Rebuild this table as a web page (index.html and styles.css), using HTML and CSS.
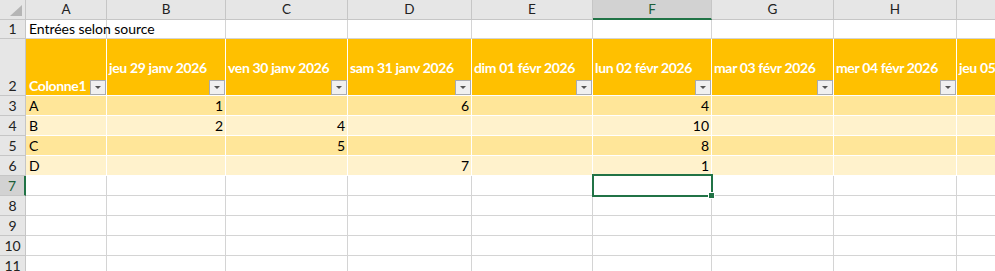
FILE: index.html
```html
<!DOCTYPE html>
<html lang="fr">
<head>
<meta charset="utf-8">
<title>Entrées selon source</title>
<link rel="stylesheet" href="styles.css">
</head>
<body>
<div class="sheet">
  <div class="corner"><svg class="tri" width="12" height="11" viewBox="0 0 12 11"><polygon points="12,0 12,11 0,11" fill="#b5b5b5"/></svg></div>
  <div class="ch">A</div><div class="ch">B</div><div class="ch">C</div><div class="ch">D</div><div class="ch">E</div><div class="ch on">F</div><div class="ch">G</div><div class="ch">H</div><div class="ch"></div>

  <div class="rh">1</div>
  <div class="c spill">Entrées selon source</div><div class="c"></div><div class="c"></div><div class="c"></div><div class="c"></div><div class="c"></div><div class="c"></div><div class="c"></div><div class="c"></div>

  <div class="rh">2</div>
  <div class="c th"><span>Colonne1</span><i class="fb"></i></div>
  <div class="c th date"><span>jeu 29 janv 2026</span><i class="fb"></i></div>
  <div class="c th date"><span>ven 30 janv 2026</span><i class="fb"></i></div>
  <div class="c th date"><span>sam 31 janv 2026</span><i class="fb"></i></div>
  <div class="c th date"><span>dim 01 févr 2026</span><i class="fb"></i></div>
  <div class="c th date"><span>lun 02 févr 2026</span><i class="fb"></i></div>
  <div class="c th date"><span>mar 03 févr 2026</span><i class="fb"></i></div>
  <div class="c th date"><span>mer 04 févr 2026</span><i class="fb"></i></div>
  <div class="c th date"><span>jeu 05 févr 2026</span><i class="fb"></i></div>

  <div class="rh">3</div>
  <div class="c b1">A</div><div class="c b1 num">1</div><div class="c b1 num"></div><div class="c b1 num">6</div><div class="c b1 num"></div><div class="c b1 num">4</div><div class="c b1 num"></div><div class="c b1 num"></div><div class="c b1 num"></div>

  <div class="rh">4</div>
  <div class="c b2">B</div><div class="c b2 num">2</div><div class="c b2 num">4</div><div class="c b2 num"></div><div class="c b2 num"></div><div class="c b2 num">10</div><div class="c b2 num"></div><div class="c b2 num"></div><div class="c b2 num"></div>

  <div class="rh">5</div>
  <div class="c b1">C</div><div class="c b1 num"></div><div class="c b1 num">5</div><div class="c b1 num"></div><div class="c b1 num"></div><div class="c b1 num">8</div><div class="c b1 num"></div><div class="c b1 num"></div><div class="c b1 num"></div>

  <div class="rh">6</div>
  <div class="c b2">D</div><div class="c b2 num"></div><div class="c b2 num"></div><div class="c b2 num">7</div><div class="c b2 num"></div><div class="c b2 num">1</div><div class="c b2 num"></div><div class="c b2 num"></div><div class="c b2 num"></div>

  <div class="rh on">7</div>
  <div class="c"></div><div class="c"></div><div class="c"></div><div class="c"></div><div class="c"></div><div class="c"></div><div class="c"></div><div class="c"></div><div class="c"></div>

  <div class="rh">8</div>
  <div class="c"></div><div class="c"></div><div class="c"></div><div class="c"></div><div class="c"></div><div class="c"></div><div class="c"></div><div class="c"></div><div class="c"></div>

  <div class="rh">9</div>
  <div class="c"></div><div class="c"></div><div class="c"></div><div class="c"></div><div class="c"></div><div class="c"></div><div class="c"></div><div class="c"></div><div class="c"></div>

  <div class="rh">10</div>
  <div class="c"></div><div class="c"></div><div class="c"></div><div class="c"></div><div class="c"></div><div class="c"></div><div class="c"></div><div class="c"></div><div class="c"></div>

  <div class="rh">11</div>
  <div class="c"></div><div class="c"></div><div class="c"></div><div class="c"></div><div class="c"></div><div class="c"></div><div class="c"></div><div class="c"></div><div class="c"></div>

  <span class="selbox"></span>
  <span class="handle"></span>
</div>
</body>
</html>
```

FILE: styles.css
```css
html, body {
  margin: 0;
  padding: 0;
  background: #ffffff;
  overflow: hidden;
}

body {
  font-family: Lato, "Liberation Sans", sans-serif;
  font-size: 14px;
  letter-spacing: -0.05px;
  color: #000000;
}

.sheet {
  position: relative;
  display: grid;
  grid-template-columns: 26px 81px 119px 122px 124px 121px 119px 122px 123px 140px;
  grid-template-rows: 20px 19px 57px repeat(9, 20px);
  width: max-content;
}

.corner,
.ch,
.rh,
.c {
  box-sizing: border-box;
  border-right: 1px solid #d4d4d4;
  border-bottom: 1px solid #d4d4d4;
  overflow: hidden;
  white-space: nowrap;
}

.c.spill {
  overflow: visible;
}

.corner {
  background: #e6e6e6;
  border-color: #c6c6c6;
  display: flex;
  align-items: flex-end;
  justify-content: flex-end;
  padding: 0 3px 3px 0;
}

.tri {
  display: block;
}

.ch {
  background: #e6e6e6;
  border-color: #c6c6c6;
  text-align: center;
  font-size: 13.5px;
  letter-spacing: 0;
  line-height: 19px;
  color: #222222;
}

.ch.on {
  background: #d2d2d2;
  border-bottom: 2px solid #217346;
  color: #1d5e38;
}

.rh {
  background: #e6e6e6;
  border-color: #c6c6c6;
  display: flex;
  align-items: flex-end;
  justify-content: center;
  font-size: 14px;
  letter-spacing: 0;
  line-height: 18px;
  color: #222222;
}

.rh.on {
  background: #d2d2d2;
  border-right: 2px solid #217346;
  color: #1d5e38;
}

.c {
  display: flex;
  align-items: flex-end;
  padding: 0 2px 0 3px;
  line-height: 18px;
}

.num {
  justify-content: flex-end;
}

.th {
  position: relative;
  background: #ffc000;
  color: #ffffff;
  font-weight: bold;
  letter-spacing: -0.35px;
  border-right-color: #ffffff;
  border-bottom-color: #ffffff;
}

.th.date {
  padding-left: 2px;
  padding-bottom: 18px;
}

.b1 {
  background: #ffe699;
  border-right-color: #ffffff;
  border-bottom-color: #ffffff;
}

.b2 {
  background: #fff2cc;
  border-right-color: #ffffff;
  border-bottom-color: #ffffff;
}

.fb {
  position: absolute;
  right: 0;
  bottom: 0;
  width: 16px;
  height: 15px;
  box-sizing: border-box;
  border: 1px solid #a9abb0;
  background: #f0f0f0;
}

.fb::after {
  content: "";
  position: absolute;
  left: 4px;
  top: 5px;
  width: 0;
  height: 0;
  border-left: 3px solid transparent;
  border-right: 3px solid transparent;
  border-top: 3px solid #555555;
}

.selbox {
  position: absolute;
  left: 592px;
  top: 174px;
  width: 121px;
  height: 23px;
  box-sizing: border-box;
  border: 2px solid #217346;
  pointer-events: none;
}

.handle {
  position: absolute;
  left: 709px;
  top: 193px;
  width: 5px;
  height: 5px;
  background: #217346;
  outline: 1px solid #ffffff;
}
```
